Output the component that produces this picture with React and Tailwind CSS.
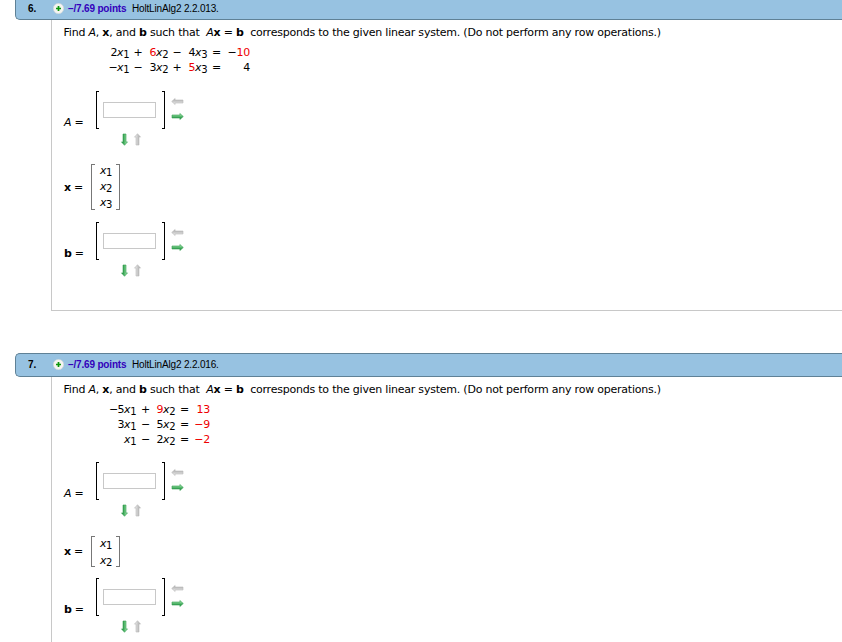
import React from 'react';

function Arrow({ dir, active }) {
  const rotation = { right: 0, down: 90, left: 180, up: 270 }[dir];
  const id = `arrow-${dir}`;
  const vertical = dir === 'down' || dir === 'up';

  return (
    <svg
      className={vertical ? 'h-[13px] w-[9px]' : 'h-[9px] w-[13px]'}
      viewBox={vertical ? '-4.5 -6.5 9 13' : '-6.5 -4.5 13 9'}
    >
      <defs>
        <linearGradient id={id} x1="0" y1="0" x2="0" y2="1">
          <stop offset="0.2" stopColor={active ? '#8fdc9c' : '#e2e2e2'} />
          <stop offset="0.8" stopColor={active ? '#1f9340' : '#b4b4b4'} />
        </linearGradient>
      </defs>
      <path
        d="M-5.5 -1.5 H2.4 V-3 L5.8 0 L2.4 3 V1.5 H-5.5 Z"
        transform={`rotate(${rotation})`}
        fill={`url(#${id})`}
        stroke={active ? '#35a052' : '#b8b8b8'}
        strokeWidth="0.6"
        strokeLinejoin="round"
      />
    </svg>
  );
}

// x with a numeric subscript, and an optional coefficient
function Term({ coef, red, n }) {
  return (
    <span className="whitespace-nowrap tracking-[-0.5px]">
      <span className={red ? 'text-[#ee0000]' : ''}>{coef}</span>
      <i>x</i>
      <span className="relative top-[2px] text-[10px]">{n}</span>
    </span>
  );
}

function Header({ number, source, raised }) {
  return (
    <div
      className={`flex h-6 items-center rounded-l-[5px] border border-r-0 border-[#5f8196] bg-[#97c2e1] font-['Liberation_Sans',sans-serif] text-[10px] tracking-[-0.17px] ${
        raised ? 'pb-0.5' : ''
      }`}
    >
      <span className="w-[37px] pl-3 font-bold">{number}.</span>
      <svg className="mr-1 h-[11px] w-[11px]" viewBox="0 0 11 11">
        <circle cx="5.5" cy="5.5" r="5.2" fill="#f4f4f0" stroke="#c9d3d6" strokeWidth="0.6" />
        <path d="M5.5 3v5M3 5.5h5" stroke="#0c960c" strokeWidth="1.7" />
      </svg>
      <span className="w-[64px] whitespace-nowrap font-bold text-[#3300bb]">–/7.69 points</span>
      <span className="whitespace-nowrap">{source}</span>
    </div>
  );
}

function AnswerMatrix({ label }) {
  return (
    <div className="grid h-[56px] grid-cols-[33px_69px_auto] grid-rows-[38px_18px]">
      <div className="pl-px pt-[25px] leading-[14px]">{label} =</div>
      <div className="flex items-center justify-between">
        <div className="h-full w-[3px] border border-r-0 border-black" />
        <input className="mr-0.5 h-4 w-[53px] border border-[#c8c8c8] bg-white" aria-label="entry" />
        <div className="h-full w-[3px] border border-l-0 border-black" />
      </div>
      <div className="flex flex-col gap-[6px] pl-[6px] pt-[6px]">
        <Arrow dir="left" />
        <Arrow dir="right" active />
      </div>
      <div className="col-start-2 flex gap-1 pl-6 pt-1">
        <Arrow dir="down" active />
        <Arrow dir="up" />
      </div>
    </div>
  );
}

function VariableMatrix({ size }) {
  return (
    <div className="flex items-center">
      <div className="w-[28px] pl-px pt-0.5">
        <b>x</b> =
      </div>
      <div className={`flex w-[29px] justify-between ${size === 3 ? 'h-[46px]' : 'h-[31px]'}`}>
        <div className="w-1 border border-r-0 border-[#777]" />
        <div className={`flex flex-col justify-center pl-px ${size === 3 ? 'leading-[16px]' : 'leading-[17px]'}`}>
          {Array.from({ length: size }, (_, i) => (
            <Term key={i} n={i + 1} />
          ))}
        </div>
        <div className="w-1 border border-l-0 border-[#777]" />
      </div>
    </div>
  );
}

function Prompt() {
  return (
    <p className="mt-[5px] h-[15px] whitespace-pre pl-[0.5px] leading-4 tracking-[-0.22px]">
      Find <i>A</i>, <b>x</b>, and <b>b</b> such that {' '}
      <i>A</i><b>x</b> = <b>b</b>{'  '}corresponds to the given linear system. (Do not perform any row operations.)
    </p>
  );
}

function App() {
  return (
    <div className="h-[642px] w-full overflow-hidden bg-white pl-[15px] font-['DejaVu_Sans',sans-serif] text-[11px] tracking-[-0.27px] text-black">
      <section className="-mt-1">
        <Header number="6" source="HoltLinAlg2 2.2.013." />
        <div className="ml-9 flex h-[291px] flex-col border-b border-l border-[#c8c8c8] pl-[11px]">
          <Prompt />
          <div className="ml-[42px] mt-[5px] grid grid-cols-[24px_18px_21px_18px_21px_19px_24px] text-right leading-[15px]">
            <Term coef="2" n="1" />
            <span className="text-center">+</span>
            <Term coef="6" red n="2" />
            <span className="text-center">−</span>
            <Term coef="4" n="3" />
            <span className="text-center">=</span>
            <span>−<span className="text-[#ee0000]">10</span></span>
            <Term coef="−" n="1" />
            <span className="text-center">−</span>
            <Term coef="3" n="2" />
            <span className="text-center">+</span>
            <Term coef="5" red n="3" />
            <span className="text-center">=</span>
            <span>4</span>
          </div>
          <div className="mt-4">
            <AnswerMatrix label={<i>A</i>} />
          </div>
          <div className="mb-3 mt-[17px]">
            <VariableMatrix size={3} />
          </div>
          <AnswerMatrix label={<b>b</b>} />
        </div>
      </section>

      <section className="mt-[42px]">
        <Header number="7" source="HoltLinAlg2 2.2.016." raised />
        <div className="ml-9 flex h-[291px] flex-col border-b border-l border-[#c8c8c8] pl-[11px]">
          <Prompt />
          <div className="ml-[42px] mt-[5px] grid grid-cols-[31px_19px_20px_19px_16px] text-right leading-[15px]">
            <Term coef="−5" n="1" />
            <span className="text-center">+</span>
            <Term coef="9" red n="2" />
            <span className="text-center">=</span>
            <span className="text-[#ee0000]">13</span>
            <Term coef="3" n="1" />
            <span className="text-center">−</span>
            <Term coef="5" n="2" />
            <span className="text-center">=</span>
            <span className="text-[#ee0000]">−9</span>
            <Term n="1" />
            <span className="text-center">−</span>
            <Term coef="2" n="2" />
            <span className="text-center">=</span>
            <span className="text-[#ee0000]">−2</span>
          </div>
          <div className="mt-[15px]">
            <AnswerMatrix label={<i>A</i>} />
          </div>
          <div className="mb-[11px] mt-[18px]">
            <VariableMatrix size={2} />
          </div>
          <AnswerMatrix label={<b>b</b>} />
        </div>
      </section>
    </div>
  );
}

export default App;
